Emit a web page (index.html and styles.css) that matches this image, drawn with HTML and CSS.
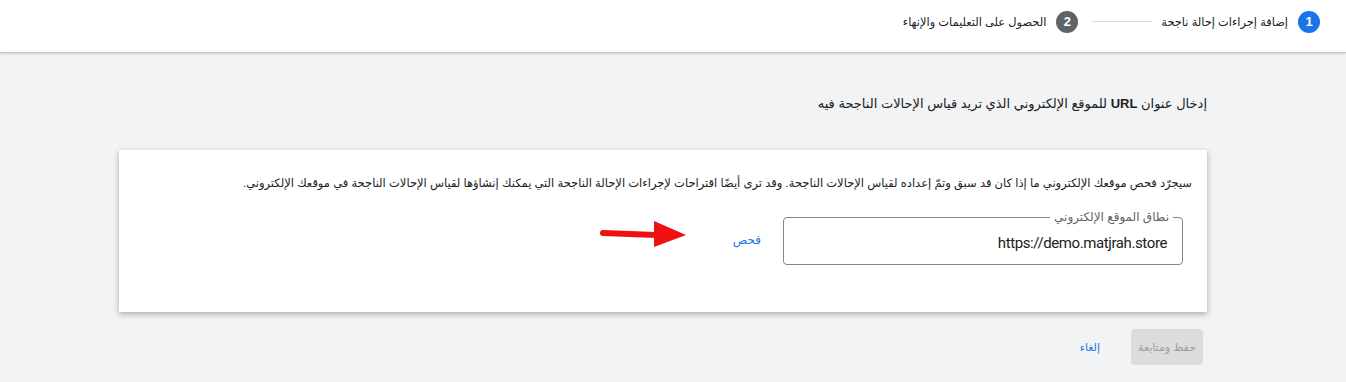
FILE: index.html
```html
<!DOCTYPE html>
<html lang="ar" dir="rtl">
<head>
<meta charset="utf-8">
<link rel="stylesheet" href="styles.css">
</head>
<body>
<header class="topbar">
  <div class="step">
    <span class="step-num active">1</span>
    <span class="step-label">إضافة إجراءات إحالة ناجحة</span>
  </div>
  <span class="step-line"></span>
  <div class="step">
    <span class="step-num">2</span>
    <span class="step-label">الحصول على التعليمات والإنهاء</span>
  </div>
</header>
<main class="content">
  <h1 class="title">إدخال عنوان <b>URL</b> للموقع الإلكتروني الذي تريد قياس الإحالات الناجحة فيه</h1>
  <section class="card">
    <p class="desc">سيجرّد فحص موقعك الإلكتروني ما إذا كان قد سبق وتمّ إعداده لقياس الإحالات الناجحة. وقد ترى أيضًا اقتراحات لإجراءات الإحالة الناجحة التي يمكنك إنشاؤها لقياس الإحالات الناجحة في موقعك الإلكتروني.</p>
    <div class="row">
      <fieldset class="field">
        <legend>نطاق الموقع الإلكتروني</legend>
        <span class="field-value" dir="ltr">https://demo.matjrah.store</span>
      </fieldset>
      <a class="check">فحص</a>
      <svg class="arrow" width="90" height="34" viewBox="0 0 90 34">
        <path d="M3 16 L56 18" stroke="#f01010" stroke-width="6" stroke-linecap="round" fill="none"/>
        <polygon points="54,4 86,18 54,30" fill="#f01010"/>
      </svg>
    </div>
  </section>
  <div class="actions">
    <button class="btn-save">حفظ ومتابعة</button>
    <a class="btn-cancel">إلغاء</a>
  </div>
</main>
</body>
</html>
```
FILE: styles.css
```css
* { box-sizing: border-box; }
html, body { margin: 0; padding: 0; }
body {
  background: #f1f3f4;
  font-family: Arial, "Liberation Sans", "DejaVu Sans", sans-serif;
  color: #202124;
  width: 1346px;
  height: 382px;
  overflow: hidden;
}
.topbar {
  height: 53px;
  background: #fff;
  border-bottom: 1px solid #c8c8c8;
  box-shadow: 0 1px 2px rgba(0,0,0,0.15);
  display: flex;
  align-items: center;
  padding-right: 26px;
  padding-bottom: 9px;
}
.step { display: flex; align-items: center; gap: 10px; }
.step-num {
  width: 22px; height: 22px; border-radius: 50%;
  background: #5f6368; color: #fff;
  font-size: 13px; font-weight: bold;
  display: flex; align-items: center; justify-content: center;
}
.step-num.active { background: #1a73e8; }
.step-label { font-size: 11.4px; color: #202124; }
.step-line {
  width: 60px; height: 1px; background: #dadce0;
  margin: 0 9px 0 14px;
}
.content {
  padding: 0 139px 0 119px;
}
.title {
  font-size: 13px;
  font-weight: normal;
  margin: 43px 0 0 0;
  height: 18px;
}
.title b { font-weight: bold; }
.card {
  margin-top: 36px;
  background: #fff;
  box-shadow: 0 2px 6px rgba(0,0,0,0.3);
  height: 162px;
  padding: 26px 15px 0 15px;
  position: relative;
}
.desc {
  margin: 0;
  font-size: 11.5px;
  line-height: 14px;
  color: #202124;
}
.row {
  display: flex;
  align-items: center;
  margin-top: 20px;
  padding-right: 9px;
  position: relative;
}
.field {
  width: 400px;
  height: 55px;
  margin: 0;
  border: 1px solid #80868b;
  border-radius: 4px;
  padding: 0 15px 0 10px;
  display: flex;
  align-items: center;
}
.field legend {
  font-size: 12px;
  color: #5f6368;
  padding: 0 4px;
  margin-right: -6px;
}
.field-value {
  font-family: Roboto, Arial, sans-serif;
  font-size: 15px;
  letter-spacing: -0.4px;
  color: #202124;
  margin-top: -3px;
}
.check {
  font-size: 12px;
  color: #1a73e8;
  margin-right: 22px;
  margin-top: 4px;
}
.arrow {
  position: absolute;
  left: 466px;
  top: 7px;
}
.actions {
  display: flex;
  align-items: center;
  margin-top: 17px;
  padding-right: 4px;
}
.btn-save {
  width: 72px; height: 36px;
  border: none; border-radius: 4px;
  background: #dcdcdc;
  color: #9aa0a6;
  font-family: inherit;
  font-size: 11px;
}
.btn-cancel {
  font-size: 11px;
  color: #1a73e8;
  margin-right: 31px;
}
```
